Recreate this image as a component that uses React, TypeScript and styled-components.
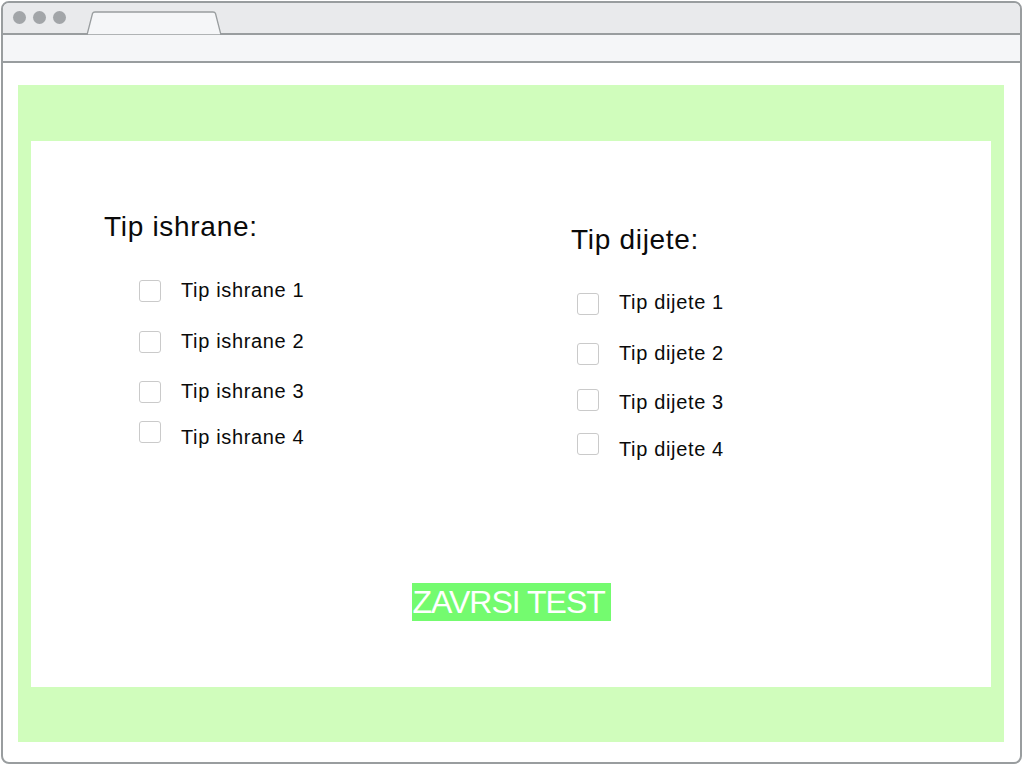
import React from "react";
import styled, { createGlobalStyle } from "styled-components";

const Global = createGlobalStyle`
  html, body { margin: 0; padding: 0; background: #ffffff; }
  body { font-family: "Liberation Sans", Arial, sans-serif; }
`;

const Window = styled.div`
  box-sizing: border-box;
  margin: 1px;
  width: 1021px;
  height: 763px;
  border: 2px solid #999d9f;
  border-radius: 8px;
  display: flex;
  flex-direction: column;
  overflow: hidden;
  background: #ffffff;
`;

const TitleBar = styled.div`
  height: 30px;
  border-bottom: 2px solid #999d9f;
  background: #e9eaec;
  display: flex;
  align-items: flex-end;
  padding-left: 10px;
`;

const Dots = styled.div`
  display: flex;
  gap: 7px;
  align-self: center;
  margin-top: -1px;
`;

const Dot = styled.span`
  display: block;
  width: 13px;
  height: 13px;
  border-radius: 50%;
  background: #a2a5a8;
`;

const TabShape = styled.svg`
  display: block;
  margin-left: 20px;
  margin-bottom: -2px;
`;

const AddressBar = styled.div`
  height: 26px;
  border-bottom: 2px solid #999d9f;
  background: #f5f6f8;
`;

const Content = styled.div`
  flex: 1;
  display: flex;
  padding: 22px 16px 20px 15px;
`;

const GreenPanel = styled.div`
  flex: 1;
  display: flex;
  background: #d0fdbc;
  padding: 56px 13px 55px 13px;
`;

const WhitePanel = styled.div`
  flex: 1;
  background: #ffffff;
  display: flex;
  flex-direction: column;
  padding: 70px 0 0 73px;
`;

const Columns = styled.div`
  display: grid;
  grid-template-columns: 467px 1fr;
  align-items: start;
`;

const Column = styled.div<{ $top: number; $indent: number }>`
  display: flex;
  flex-direction: column;
  margin-top: ${(p) => p.$top}px;
  padding-left: ${(p) => p.$indent}px;
`;

const Heading = styled.div<{ $back: number }>`
  font-size: 28px;
  line-height: 32px;
  color: #0a0a0a;
  letter-spacing: 0.7px;
  margin-left: ${(p) => -p.$back}px;
  margin-bottom: 37px;
`;

const Row = styled.label<{ $gap: number }>`
  display: flex;
  align-items: center;
  height: 22px;
  margin-top: ${(p) => p.$gap}px;
`;

const Box = styled.span`
  box-sizing: border-box;
  width: 22px;
  height: 22px;
  border: 1px solid #cacaca;
  border-radius: 3px;
  background: #fff;
  flex: none;
`;

const Label = styled.span<{ $shift: number }>`
  margin-left: 20px;
  font-size: 20px;
  line-height: 22px;
  letter-spacing: 0.65px;
  color: #0a0a0a;
  white-space: nowrap;
  transform: translateY(${(p) => p.$shift}px);
`;

const Finish = styled.button`
  align-self: center;
  margin: 128px 0 0 -73px;
  width: 199px;
  height: 38px;
  padding: 0 0 0 1px;
  border: none;
  background: #74fb6f;
  color: #ffffff;
  font-family: "Liberation Sans", Arial, sans-serif;
  font-size: 32px;
  line-height: 38px;
  letter-spacing: -1px;
  text-align: left;
  white-space: nowrap;
  cursor: pointer;
`;

type Item = { text: string; gap: number; shift: number };

const left: Item[] = [
  { text: "Tip ishrane 1", gap: 0, shift: -1 },
  { text: "Tip ishrane 2", gap: 29, shift: -1 },
  { text: "Tip ishrane 3", gap: 28, shift: -1 },
  { text: "Tip ishrane 4", gap: 18, shift: 5 },
];

const right: Item[] = [
  { text: "Tip dijete 1", gap: 0, shift: -2 },
  { text: "Tip dijete 2", gap: 28, shift: -1 },
  { text: "Tip dijete 3", gap: 24, shift: 2 },
  { text: "Tip dijete 4", gap: 22, shift: 5 },
];

const Group = ({ title, items, top, indent }: { title: string; items: Item[]; top: number; indent: number }) => (
  <Column $top={top} $indent={indent}>
    <Heading $back={indent}>{title}</Heading>
    {items.map((it) => (
      <Row key={it.text} $gap={it.gap}>
        <Box />
        <Label $shift={it.shift}>{it.text}</Label>
      </Row>
    ))}
  </Column>
);

export default function App() {
  return (
    <>
      <Global />
      <Window>
        <TitleBar>
          <Dots>
            <Dot />
            <Dot />
            <Dot />
          </Dots>
          <TabShape width="136" height="24" viewBox="0 0 136 24">
            <path d="M1 24 L6.5 2.5 Q7 1 9 1 L127 1 Q129 1 129.5 2.5 L135 24 Z" fill="#f5f6f8" stroke="#999d9f" strokeWidth="1.3" />
          </TabShape>
        </TitleBar>
        <AddressBar />
        <Content>
          <GreenPanel>
            <WhitePanel>
              <Columns>
                <Group title="Tip ishrane:" items={left} top={0} indent={35} />
                <Group title="Tip dijete:" items={right} top={13} indent={6} />
              </Columns>
              <Finish>ZAVRSI TEST</Finish>
            </WhitePanel>
          </GreenPanel>
        </Content>
      </Window>
    </>
  );
}
